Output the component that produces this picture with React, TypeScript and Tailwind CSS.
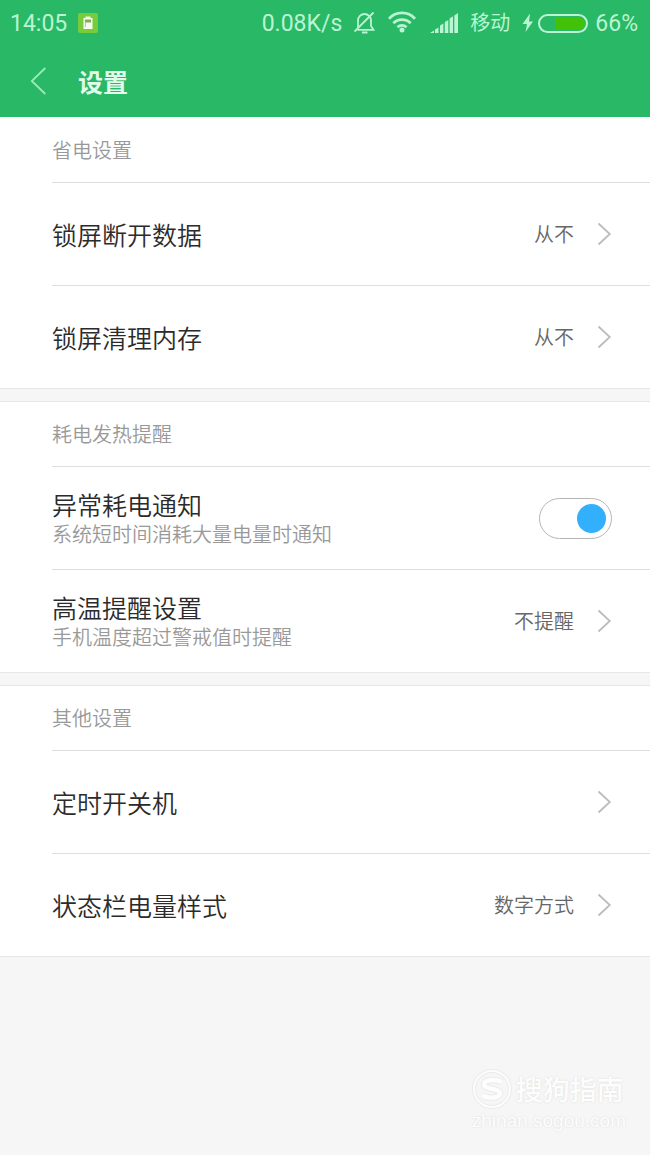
import { useState } from 'react';
import type { ReactNode } from 'react';

function Chevron() {
  return (
    <svg className="h-6 w-4 shrink-0" viewBox="0 0 16 24" fill="none" stroke="#bcbcbc" strokeWidth="1.8" aria-hidden="true">
      <path d="M2.5 1.5 L13.8 12 L2.5 22.5" />
    </svg>
  );
}

function StatusBar() {
  return (
    <div className="flex h-[46px] items-center justify-between pr-3 pl-[10px] font-[Roboto,'Noto_Sans_CJK_SC',sans-serif] text-[23px] leading-none text-[#b9f5d2]">
      <div className="flex items-center gap-[11px]">
        <span>14:05</span>
        <svg className="h-5 w-5" viewBox="0 0 20 20" aria-hidden="true">
          <rect width="20" height="20" rx="2" fill="#78cc3c" />
          <path d="M7.500 3.500h5v1.500h2V16h-9V5h2z" fill="#f4fbe9" />
          <rect x="7" y="6.500" width="6" height="3" fill="#7fae58" />
          <rect x="7" y="9.500" width="1" height="4.500" fill="#a8cf86" />
        </svg>
      </div>
      <div className="flex items-center">
        <span>0.08K/s</span>
        <svg className="ml-3 h-6 w-6" viewBox="0 0 24 24" fill="none" stroke="currentColor" strokeWidth="1.8" aria-hidden="true">
          <path d="M4 16.500V9.500a6.500 6.500 0 0 1 13 0v5.500l2.500 3.800H3.500" />
          <path d="M0.500 20.500L19.500 1.500" />
          <path d="M8 21.500h5.500" strokeWidth="2" />
        </svg>
        <svg className="ml-2 h-6 w-8" viewBox="0 0 32 24" fill="none" stroke="currentColor" strokeWidth="2.800" aria-hidden="true">
          <path d="M3 7.800C10 -0.100 22 -0.100 29 7.800" />
          <path d="M7.400 12.200C12 7.300 20 7.300 24.600 12.200" />
          <path d="M11.500 16.200C14 13.800 18 13.800 20.500 16.200" />
          <circle cx="16" cy="19" r="2.500" fill="currentColor" stroke="none" />
        </svg>
        <svg className="ml-3 h-5 w-7" viewBox="0 0 28 20" fill="currentColor" aria-hidden="true">
          <path d="M0 20L4 17.500V20zM5 20V16.500L8.500 14.500V20zM10 20V12.500L13.400 10.500V20zM14.800 20V9L18.300 7V20zM19.600 20V5.500L23 3.300V20zM24.300 20V2.500L28 0V20z" />
        </svg>
        <span className="ml-3 text-[20px]">移动</span>
        <svg className="ml-3 h-5 w-3" viewBox="0 0 12 20" fill="currentColor" aria-hidden="true">
          <path d="M8 0.500L0.500 11H5L3.500 19L11 8.500H7z" />
        </svg>
        <span className="ml-1 flex h-[19px] w-[50px] justify-end rounded-full border-2 border-current p-px">
          <span className="w-[30px] rounded-r-full bg-[#43c108]" />
        </span>
        <span className="ml-[7px]">66%</span>
      </div>
    </div>
  );
}

function Section({ title, children }: { title: string; children: ReactNode }) {
  return (
    <section className="border-y border-[#e6e6e6] bg-white first:border-t-white">
      <h2 className="flex h-16 items-center pl-[52px] text-[20px] font-[350] text-[#999]">{title}</h2>
      {children}
    </section>
  );
}

const rowClass =
  'flex h-[103px] items-center border-t border-[#dedede] pr-[38px] text-left';

function Labels({ label, hint }: { label: string; hint?: string }) {
  return (
    <span className="flex flex-1 flex-col font-[350]">
      <span className="text-[25px] leading-8 text-[#2b2b2b]">{label}</span>
      {hint && <span className="text-[20px] leading-7 text-[#999]">{hint}</span>}
    </span>
  );
}

function LinkRow({ label, hint, value }: { label: string; hint?: string; value?: string }) {
  return (
    <div className="pl-[52px]">
      <button type="button" className={`${rowClass} w-full`}>
        <Labels label={label} hint={hint} />
        {value && <span className="text-[20px] font-[350] text-[#666]">{value}</span>}
        <span className="ml-[22px] flex">
          <Chevron />
        </span>
      </button>
    </div>
  );
}

function SwitchRow({ label, hint }: { label: string; hint?: string }) {
  const [on, setOn] = useState(true);
  return (
    <div className="pl-[52px]">
      <label className={rowClass}>
        <Labels label={label} hint={hint} />
        <input
          type="checkbox"
          role="switch"
          checked={on}
          onChange={(e) => setOn(e.target.checked)}
          className="flex h-[41px] w-[73px] appearance-none items-center rounded-full border border-[#b5b5b5] bg-white px-[5px] before:h-[29px] before:w-[29px] before:rounded-full before:bg-[#b5b5b5] checked:justify-end checked:before:bg-[#33b0fb]"
        />
      </label>
    </div>
  );
}

export default function App() {
  return (
    <div className="relative min-h-screen bg-[#f6f6f6] font-['Noto_Sans_CJK_SC',sans-serif]">
      <header className="bg-[#29b866]">
        <StatusBar />
        <div className="flex h-[71px] items-center pb-[2px] pl-[30px]">
          <button type="button" aria-label="返回" className="flex">
            <svg className="h-7 w-4" viewBox="0 0 16 28" fill="none" stroke="#98ecb4" strokeWidth="1.800" aria-hidden="true">
              <path d="M15.300 1L1.800 14L15.300 27" />
            </svg>
          </button>
          <h1 className="ml-8 text-[25px] leading-8 font-bold text-[#e0fdec]">设置</h1>
        </div>
      </header>
      <main className="flex flex-col gap-3">
        <Section title="省电设置">
          <LinkRow label="锁屏断开数据" value="从不" />
          <LinkRow label="锁屏清理内存" value="从不" />
        </Section>
        <Section title="耗电发热提醒">
          <SwitchRow label="异常耗电通知" hint="系统短时间消耗大量电量时通知" />
          <LinkRow label="高温提醒设置" hint="手机温度超过警戒值时提醒" value="不提醒" />
        </Section>
        <Section title="其他设置">
          <LinkRow label="定时开关机" />
          <LinkRow label="状态栏电量样式" value="数字方式" />
        </Section>
      </main>
      <div className="absolute right-6 bottom-[22px] text-[#fdfdfd] [text-shadow:0_0_2px_#d8d8d8]">
        <div className="flex items-center gap-1">
          <svg className="h-10 w-10" viewBox="0 0 40 40" fill="none" aria-hidden="true">
            <circle cx="20" cy="20" r="18" stroke="#ebebeb" strokeWidth="4" />
            <circle cx="20" cy="20" r="18" stroke="#fdfdfd" strokeWidth="2" />
            <path d="M30 13C24 10 12 10.500 12 15.500C12 20.500 28 19 28 24.500C28 29 16 30 10 26.500" stroke="#ebebeb" strokeWidth="6.500" />
            <path d="M30 13C24 10 12 10.500 12 15.500C12 20.500 28 19 28 24.500C28 29 16 30 10 26.500" stroke="#fdfdfd" strokeWidth="4.500" />
          </svg>
          <span className="text-[27px] leading-9 font-medium">搜狗指南</span>
        </div>
        <div className="font-['Liberation_Sans',sans-serif] text-[19px] leading-6">zhinan.sogou.com</div>
      </div>
    </div>
  );
}
